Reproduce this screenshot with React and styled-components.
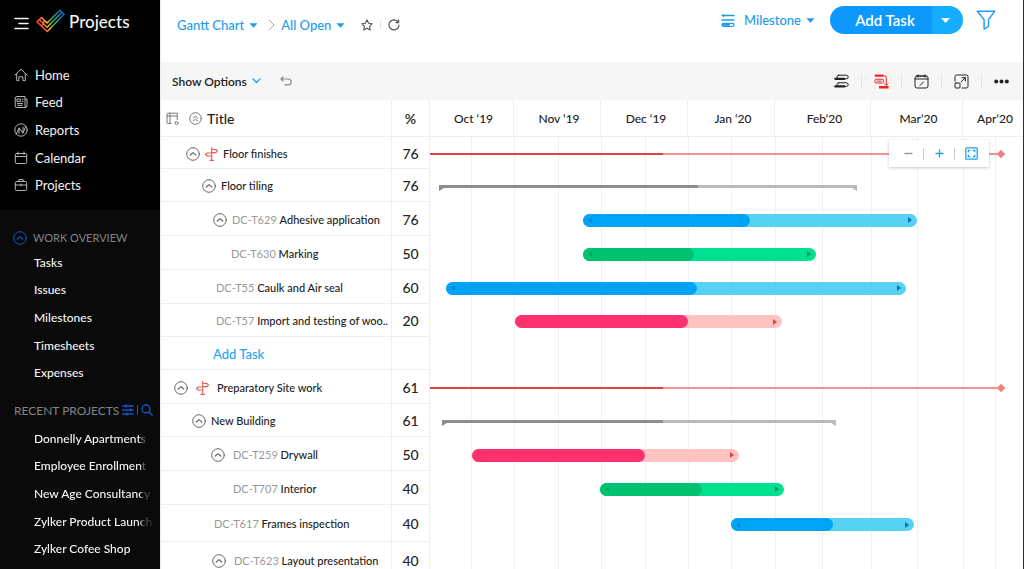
import { useState } from "react"
import styled, { createGlobalStyle } from "styled-components"

const GlobalStyle = createGlobalStyle`
* { box-sizing: border-box; }
body {
  margin: 0;
  font-family: Lato, "Open Sans", sans-serif;
  font-size: 13px;
  color: #222;
  background: #fff;
}
button, select {
  font: inherit;
  color: inherit;
  background: none;
  border: 0;
  padding: 0;
  cursor: pointer;
}
a { color: inherit; text-decoration: none; }
ul { list-style: none; margin: 0; padding: 0; }
svg { display: block; flex: none; }
`
const Page = styled.div`
display: flex;
height: 100vh;
overflow: hidden;
`

/* sidebar */
const Sidebar = styled.aside`
width: 160px;
flex: none;
background: #0a0a0a;
color: #f4f4f4;
`
const MainMenu = styled.div`
height: 210px;
background: #000;
`
const Brand = styled.div`
display: flex;
align-items: center;
height: 61px;
padding: 0 0 19px 14px;
`
const BrandName = styled.span`
font-size: 17px;
font-weight: 500;
margin-left: 4px;
`
const MenuButton = styled.button`
margin-right: 7px;
padding-top: 4px;
`
const NavList = styled.ul`
display: grid;
grid-auto-rows: 1fr;
height: 138px;
`
const NavLink = styled.a`
display: flex;
align-items: center;
gap: 7px;
height: 100%;
padding-left: ${props => props.$icon ? "14px" : "34px"};
font-size: ${props => props.$icon ? "13px" : "12px"};
font-weight: ${props => props.$icon ? 400 : 500};
line-height: 20px;
svg { color: #b5b5b5; }
`
const Fade = styled.span`
width: 126px;
white-space: nowrap;
mask-image: linear-gradient(to right, #000 106px, rgba(0, 0, 0, 0.35) 109px, rgba(0, 0, 0, 0.1) 120px);
`
const SectionHead = styled.div`
display: flex;
align-items: center;
gap: ${props => props.$gap}px;
height: ${props => props.$tall ? 39 : 38}px;
padding: ${props => props.$pad};
font-size: ${props => props.$tall ? 11 : 12}px;
color: #808488;
white-space: nowrap;
svg { color: #1556c8; }
`
const HeadRule = styled.span`
width: 1px;
height: 10px;
background: #555;
`

/* header */
const Main = styled.main`
flex: 1;
min-width: 0;
display: flex;
flex-direction: column;
border-left: 1px solid #ececec;
border-right: 1px solid #2b2b2b;
`
const TopBar = styled.header`
display: flex;
justify-content: space-between;
align-items: center;
flex: none;
height: 62px;
padding: 0 27px 0 16px;
color: #1c9cec;
`
const Crumbs = styled.div`
display: flex;
align-items: center;
padding-bottom: 12px;
`
const Picker = styled.label`
display: flex;
align-items: center;
gap: 5px;
`
const Select = styled.select`
appearance: none;
field-sizing: content;
font-size: 13px;
font-weight: 500;
line-height: 20px;
outline: none;
`
const CrumbArrow = styled.span`
color: #aaa;
margin: 0 6px 0 10px;
`
const CrumbTools = styled.div`
display: flex;
align-items: center;
gap: 7px;
margin-left: 16px;
color: #555;
`
const Divider = styled.span`
width: 1px;
height: ${props => props.$h || 14}px;
background: ${props => props.$dark ? "#ccc" : "#e2e2e2"};
`
const Actions = styled.div`
display: flex;
align-items: center;
padding-bottom: 22px;
`
const SplitButton = styled.div`
display: flex;
height: 28px;
margin: 0 13px 0 15px;
border-radius: 14px;
overflow: hidden;
color: #fff;
`
const AddButton = styled.button`
width: 102px;
padding-left: 8px;
font-size: 15px;
font-weight: 600;
background: #0c98fd;
`
const AddMenu = styled.button`
width: 31px;
padding-left: 8px;
background: #16acff;
`
const ToolBar = styled.div`
display: flex;
justify-content: space-between;
align-items: center;
flex: none;
height: 38px;
padding: 0 14px 0 11px;
background: #f6f6f6;
`
const Options = styled.button`
display: flex;
align-items: center;
gap: 5px;
font-size: 12px;
font-weight: 600;
`
const ToolGroup = styled.div`
display: flex;
align-items: center;
gap: ${props => props.$gap}px;
`

/* task table */
const Chart = styled.div`
display: flex;
flex: 1;
min-height: 0;
`
const Table = styled.table`
width: 269px;
height: max-content;
flex: none;
table-layout: fixed;
border-collapse: separate;
border-spacing: 0;
`
const HeadCell = styled.th`
width: ${props => props.$w || "auto"};
height: 37px;
padding: 0 0 0 ${props => props.$center ? 0 : 5}px;
font-weight: ${props => props.$center ? 600 : 500};
font-size: 14px;
text-align: ${props => props.$center ? "center" : "left"};
border-right: 1px solid #eee;
border-bottom: 1px solid #eee;
`
const HeadInner = styled.div`
display: flex;
align-items: center;
gap: 10px;
svg { color: #777; }
span { margin-left: -5px; }
`
const Cell = styled.td`
padding: 2px 0 0;
border-right: 1px solid #eee;
border-bottom: 1px solid #eee;
`
const Percent = styled(Cell)`
text-align: center;
font-size: 14px;
font-weight: 500;
line-height: 18px;
`
const TaskLine = styled.div`
display: flex;
align-items: center;
gap: ${props => props.$wide ? 8 : 5}px;
font-size: 11px;
font-weight: 500;
line-height: 16px;
white-space: nowrap;
`
const Toggle = styled.button`
color: #666;
`
const TaskId = styled.span`
color: #999;
font-weight: 400;
`
const AddLink = styled.button`
color: #1ba8f0;
font-size: 13px;
line-height: 16px;
`

/* timeline */
const Timeline = styled.section`
flex: 1;
min-width: 0;
display: flex;
flex-direction: column;
`
const Months = styled.div`
display: grid;
grid-template-columns: 84fr 87fr 87fr 87fr 96fr 92fr 60fr;
flex: none;
height: 37px;
border-bottom: 1px solid #eee;
`
const Month = styled.div`
display: flex;
align-items: center;
justify-content: center;
padding-left: 4px;
font-size: 12px;
font-weight: 500;
border-right: 1px solid #eee;
white-space: nowrap;
&:last-child { border-right: 0; }
`
const Lanes = styled.div`
position: relative;
flex: 1;
min-height: 0;
`
const GridLines = styled.div`
position: absolute;
inset: 0;
display: grid;
grid-template-columns: 42fr 43fr 44fr 43fr 44fr 43fr 43fr 44fr 47fr 49fr 46fr 46fr 32fr 27fr;
span { border-right: 1px solid #f0f0f0; }
span:last-child { border-right: 0; }
`
const Lane = styled.div`
position: relative;
display: flex;
align-items: center;
padding-top: 2px;
`
const Bar = styled.div`
height: 13px;
border-radius: 7px;
background: ${props => props.$tone.rest};
display: flex;
align-items: center;
justify-content: space-between;
padding-right: 5px;
color: ${props => props.$tone.arrow};
`
const BarDone = styled.div`
height: 100%;
border-radius: 7px;
background: ${props => props.$tone.done};
display: flex;
align-items: center;
padding-left: 5px;
`
const Summary = styled.div`
height: 3px;
background: #bababa;
position: relative;
&::before, &::after {
  content: "";
  position: absolute;
  top: 3px;
  border-top: 3px solid #8d8d8d;
}
&::before { left: 0; border-right: 5px solid transparent; }
&::after { right: 0; border-top-color: #bababa; border-left: 5px solid transparent; }
`
const SummaryDone = styled.div`
height: 100%;
background: #8d8d8d;
`
const Phase = styled.div`
height: 2px;
background: #f5918e;
position: relative;
&::after {
  content: "";
  position: absolute;
  right: -3px;
  top: -2px;
  width: 6px;
  height: 6px;
  background: #f5817e;
  transform: rotate(45deg);
}
`
const PhaseDone = styled.div`
height: 100%;
background: #dc4444;
`
const ZoomBox = styled.div`
position: absolute;
top: 3px;
right: 34px;
display: flex;
align-items: center;
justify-content: space-between;
width: 100px;
height: 27px;
padding: 0 11px 0 15px;
background: #fff;
color: #1ba3ee;
box-shadow: 0 1px 3px rgba(0, 0, 0, 0.22);
`

const tones = {
  blue: { done: "#00a4f7", rest: "#56d3f4", arrow: "#0575ad" },
  green: { done: "#00c270", rest: "#00e08f", arrow: "#009a5c" },
  pink: { done: "#ff306e", rest: "#fec2c0", arrow: "#d8444c" },
}

// width of the whole visible range, in timeline units
const RANGE = 593
const pct = n => `${(n / RANGE) * 100}%`

const tasks = [
  { h: 32, indent: 25, toggle: true, phase: true, name: "Floor finishes", percent: 76, type: "phase", from: 0, to: 571, done: 233 },
  { h: 33, indent: 41, toggle: true, name: "Floor tiling", percent: 76, type: "summary", from: 9, to: 427, done: 268 },
  { h: 34, indent: 52, toggle: true, id: "DC-T629", name: "Adhesive application", percent: 76, tone: "blue", from: 153, to: 487, done: 320 },
  { h: 34, indent: 70, id: "DC-T630", name: "Marking", percent: 50, tone: "green", from: 153, to: 386, done: 264 },
  { h: 34, indent: 55, id: "DC-T55", name: "Caulk and Air seal", percent: 60, tone: "blue", from: 16, to: 476, done: 267 },
  { h: 33, indent: 55, id: "DC-T57", name: "Import and testing of woo..", percent: 20, tone: "pink", from: 85, to: 352, done: 258 },
  { h: 33, indent: 52, add: true },
  { h: 34, indent: 13, toggle: true, phase: true, wide: true, name: "Preparatory Site work", percent: 61, type: "phase", from: 0, to: 571, done: 233 },
  { h: 33, indent: 31, toggle: true, name: "New Building", percent: 61, type: "summary", from: 12, to: 406, done: 233 },
  { h: 34, indent: 50, toggle: true, wide: true, id: "DC-T259", name: "Drywall", percent: 50, tone: "pink", from: 42, to: 309, done: 215 },
  { h: 34, indent: 72, id: "DC-T707", name: "Interior", percent: 40, tone: "green", from: 170, to: 354, done: 272 },
  { h: 37, indent: 53, id: "DC-T617", name: "Frames inspection", percent: 40, tone: "blue", from: 301, to: 484, done: 403 },
  { h: 37, indent: 51, toggle: true, wide: true, id: "DC-T623", name: "Layout presentation", percent: 40 },
]

const months = ["Oct ‘19", "Nov ‘19", "Dec ‘19", "Jan ‘20", "Feb‘20", "Mar‘20", "Apr‘20"]
const overview = ["Tasks", "Issues", "Milestones", "Timesheets", "Expenses"]
const recent = ["Donnelly Apartments", "Employee Enrollment", "New Age Consultancy", "Zylker Product Launch", "Zylker Cofee Shop"]

function Icon({ w = 14, h = w, box, children, width = 1 }) {
  return (
    <svg width={w} height={h} viewBox={box || `0 0 ${w} ${h}`} fill="none" stroke="currentColor"
      strokeWidth={width} strokeLinecap="round" strokeLinejoin="round" aria-hidden="true">
      {children}
    </svg>
  )
}

const Caret = ({ w = 9 }) => (
  <svg width={w} height="5" viewBox="0 0 10 5" fill="currentColor" aria-hidden="true"><path d="M0.5 0h9L5 5z" /></svg>
)

const Logo = () => (
  <svg width="29" height="24" viewBox="0 0 29 24" fill="none" strokeWidth="1.6" strokeLinejoin="round" aria-hidden="true">
    <defs>
      <linearGradient id="check" gradientUnits="userSpaceOnUse" x1="1" y1="16" x2="28" y2="4">
        <stop offset="0" stopColor="#e5352e" />
        <stop offset="0.2" stopColor="#f0633a" />
        <stop offset="0.36" stopColor="#f5c32c" />
        <stop offset="0.5" stopColor="#3dab4d" />
        <stop offset="0.7" stopColor="#1fa08c" />
        <stop offset="0.9" stopColor="#1668c4" />
      </linearGradient>
    </defs>
    <g stroke="url(#check)">
      <path d="M5.5 8.5 11 14 24 1.2 28 5.2 11.3 22.5 1 12.8z" />
      <path d="M3.4 10.7 11 18.3 26 3.2" />
      <path d="M7.5 14.8 5.3 17M8.9 12l-2 2" />
    </g>
  </svg>
)

const navItems = [
  ["Home", <path d="M1 7 7 1.2 13 7M2.7 6v6.6h2.2V8.8h4v3.8h2.4V6" />],
  ["Feed", <path d="M3 1.5h8v9.8a1.3 1.3 0 0 0 2 0V4h-2M3 1.5A1.7 1.7 0 0 0 1.2 3v8a1.5 1.5 0 0 0 1.6 1.5h9M3.4 4h3v2.5h-3zM3.4 8.5h5M3.4 10.3h5M8.2 4.2h.8M8.2 6.3h.8" />],
  ["Reports", <><circle cx="7" cy="7" r="6.2" /><path d="M2.3 11 5 5l4 5 2.8-7M5 5v5.5M9 10V4" /></>],
  ["Calendar", <path d="M2.5 2.5h9a1.2 1.2 0 0 1 1.2 1.2v7.6a1.2 1.2 0 0 1-1.2 1.2h-9a1.2 1.2 0 0 1-1.2-1.2V3.7a1.2 1.2 0 0 1 1.2-1.2zM1.3 5.5h11.4M4 1v2.4M10 1v2.4" />],
  ["Projects", <path d="M2.5 3.5h9a1.2 1.2 0 0 1 1.2 1.2v6.6a1.2 1.2 0 0 1-1.2 1.2h-9a1.2 1.2 0 0 1-1.2-1.2V4.7a1.2 1.2 0 0 1 1.2-1.2zM4.8 3.4V1.6h4.4v1.8M1.3 7h11.4M7 6v2" />],
]

const CircleUp = () => (
  <Icon><circle cx="7" cy="7" r="6.3" /><path d="M4.2 8 7 5.6 9.8 8" strokeWidth="1.2" /></Icon>
)

const Signpost = () => (
  <svg width="13" height="14" viewBox="0 0 13 14" fill="none" stroke="#ef5552" strokeWidth="1.1" strokeLinejoin="round" strokeLinecap="round" aria-hidden="true">
    <path d="M6.7 0.6v12.8M5 13.4h3.4M6.7 2.5h4.2l1.6 1.6-1.6 1.5H6.7M6.7 6H2.2L.6 7.5 2.2 9h4.5z" />
  </svg>
)

function SidebarMenu() {
  return (
    <Sidebar>
      <MainMenu>
        <Brand>
          <MenuButton aria-label="Menu">
            <Icon w={15} h={13} width={1.6}><path d="M1 1.5h13M5 6.5h9M1 11.5h13" /></Icon>
          </MenuButton>
          <Logo />
          <BrandName>Projects</BrandName>
        </Brand>
        <nav>
          <NavList>
            {navItems.map(([name, icon]) => (
              <li key={name}><NavLink href="#" $icon><Icon>{icon}</Icon>{name}</NavLink></li>
            ))}
          </NavList>
        </nav>
      </MainMenu>
      <SectionHead $tall $gap={6} $pad="16px 0 0 13px"><CircleUp />WORK OVERVIEW</SectionHead>
      <NavList>
        {overview.map(name => <li key={name}><NavLink href="#">{name}</NavLink></li>)}
      </NavList>
      <SectionHead $gap={3} $pad="8px 0 0 14px">
        RECENT PROJECTS
        <Icon w={12} width={1.3}><path d="M.7 2h10.6M.7 6h10.6M.7 10h10.6M4 .8v2.4M8.5 4.8v2.4M5 8.8v2.4" /></Icon>
        <HeadRule />
        <Icon w={12} width={1.4}><circle cx="5" cy="5" r="4" /><path d="m8 8 3.2 3.2" /></Icon>
      </SectionHead>
      <NavList>
        {recent.map(name => <li key={name}><NavLink href="#"><Fade>{name}</Fade></NavLink></li>)}
      </NavList>
    </Sidebar>
  )
}

function Dropdown({ label, options }) {
  return (
    <Picker>
      <Select aria-label={label}>
        {options.map(option => <option key={option}>{option}</option>)}
      </Select>
      <Caret />
    </Picker>
  )
}

function Header() {
  return (
    <TopBar>
      <Crumbs>
        <Dropdown label="View" options={["Gantt Chart", "List"]} />
        <CrumbArrow><Icon w={7} h={12}><path d="m1 1 5 5-5 5" /></Icon></CrumbArrow>
        <Dropdown label="Filter" options={["All Open", "Closed"]} />
        <CrumbTools>
          <button aria-label="Favourite"><Icon w={12} box="0 0 14 14" width={1.3}><path d="m7 1 1.9 3.9 4.1.6-3 3 .7 4.3L7 10.7l-3.7 2.1.7-4.3-3-3 4.1-.6z" /></Icon></button>
          <Divider $h={8} />
          <button aria-label="Refresh"><Icon w={12} width={1.2}><path d="M10.2 3.2A5 5 0 1 0 11 6M10.6 1v2.6H8" /></Icon></button>
        </CrumbTools>
      </Crumbs>
      <Actions>
        <ToolGroup $gap={9}>
          <Icon w={14} h={13} width={1.3}>
            <path d="M1 1.5h12M1 6h12M2.5.5v2" />
            <rect x="1" y="9.3" width="12" height="3" rx="1.5" />
            <path d="M2 10.8h6" strokeWidth="2" />
          </Icon>
          <Dropdown label="Group by" options={["Milestone", "Status"]} />
        </ToolGroup>
        <SplitButton>
          <AddButton>Add Task</AddButton>
          <AddMenu aria-label="More add options" aria-haspopup="menu"><Caret w={11} /></AddMenu>
        </SplitButton>
        <button aria-label="Filter tasks">
          <Icon w={20} width={1.4}><path d="M1.2 1.2h17.6L12.5 9.5v7l-4.4 2.6V9.5z" /></Icon>
        </button>
      </Actions>
    </TopBar>
  )
}

function Tools() {
  return (
    <ToolBar>
      <ToolGroup $gap={19}>
        <Options aria-haspopup="menu">
          Show Options
          <Icon w={9} h={6} width={1.3}><path d="m1 1 3.5 3.5L8 1" stroke="#1ba3ee" /></Icon>
        </Options>
        <button aria-label="Undo">
          <Icon w={12} h={10} width={1.2}><path d="M3 1 1 3l2 2M1 3h7.2a2.9 2.9 0 0 1 0 5.8H5" stroke="#888" /></Icon>
        </button>
      </ToolGroup>
      <ToolGroup $gap={12}>
        <button aria-label="Baseline">
          <Icon w={15}>
            <rect x="3" y="1.2" width="11.2" height="3.6" rx="1.8" />
            <path d="M1.3 4.8h9" strokeWidth="2.2" />
            <rect x="3" y="8.8" width="11.2" height="3.6" rx="1.8" />
            <path d="M1.3 12.4h9" strokeWidth="2.2" />
          </Icon>
        </button>
        <Divider />
        <button aria-label="Critical path">
          <svg width="15" height="15" viewBox="0 0 15 15" fill="none" stroke="#ee2326" strokeLinejoin="round" aria-hidden="true">
            <path d="M.8 1.6h8.7M5 13.2h9.6" strokeWidth="2.4" />
            <path d="M9.5 2h1.6c.8 0 1.2.5 1.2 1.2v7.6M10.4 9.6l1.9 1.9 1.9-1.9" />
            <rect x="1" y="5.2" width="8.4" height="3.8" rx="1" />
            <path d="M2.8 7.1h4.8" />
          </svg>
        </button>
        <Divider />
        <button aria-label="Schedule">
          <Icon w={15}><rect x="1" y="2" width="13" height="12" rx="2" /><path d="M1 5h13M3 2h9M4 .8v2.4M11 .8v2.4M6 11.4l3.5-3.5" /></Icon>
        </button>
        <Divider />
        <button aria-label="Expand">
          <Icon w={15}><path d="M1 7V2.6A1.6 1.6 0 0 1 2.6 1h9.8A1.6 1.6 0 0 1 14 2.6v9.8a1.6 1.6 0 0 1-1.6 1.6H8M7 8l4.3-4.3M8 3.7h3.3V7" /><rect x="1" y="9" width="5" height="5" rx="1" /></Icon>
        </button>
        <Divider />
        <button aria-label="More">
          <svg width="15" height="5" viewBox="0 0 15 5" fill="#222" aria-hidden="true"><circle cx="2.2" cy="2.5" r="2" /><circle cx="7.5" cy="2.5" r="2" /><circle cx="12.8" cy="2.5" r="2" /></svg>
        </button>
      </ToolGroup>
    </ToolBar>
  )
}

function TaskTable() {
  return (
    <Table>
      <thead>
        <tr>
          <HeadCell>
            <HeadInner>
              <Icon w={13}><path d="M5 11.5H2a1 1 0 0 1-1-1V2.2a1 1 0 0 1 1-1h9.2V4M1 4h10.2v3.5M4 1.2v10.3" /><circle cx="10.5" cy="11" r="1.5" /></Icon>
              <Icon w={13}><circle cx="6.5" cy="6.5" r="5.8" /><path d="m4.3 6.2 2.2-2 2.2 2M4.3 9l2.2-2 2.2 2" /></Icon>
              <span>Title</span>
            </HeadInner>
          </HeadCell>
          <HeadCell $w="38px" $center>%</HeadCell>
        </tr>
      </thead>
      <tbody>
        {tasks.map((task, index) => (
          <tr key={index} style={{ height: task.h }}>
            <Cell>
              <TaskLine $wide={task.wide} style={{ paddingLeft: task.indent }}>
                {task.toggle && <Toggle aria-label={`Collapse ${task.name}`}><CircleUp /></Toggle>}
                {task.phase && <Signpost />}
                {task.add
                  ? <AddLink>Add Task</AddLink>
                  : <span>{task.id && <TaskId>{task.id} </TaskId>}{task.name}</span>}
              </TaskLine>
            </Cell>
            <Percent>{task.percent}</Percent>
          </tr>
        ))}
      </tbody>
    </Table>
  )
}

function LaneItem({ task }) {
  const { type, tone, from, to, done } = task
  if (!to) return null
  const place = { marginLeft: pct(from), width: pct(to - from) }
  const progress = { width: `${((done - from) / (to - from)) * 100}%` }
  if (type === "phase") return <Phase style={place}><PhaseDone style={progress} /></Phase>
  if (type === "summary") return <Summary style={place}><SummaryDone style={progress} /></Summary>
  return (
    <Bar $tone={tones[tone]} style={place}>
      <BarDone $tone={tones[tone]} style={{ width: `calc((100% + 5px) * ${(done - from) / (to - from)})` }}>
        <svg width="4" height="6" viewBox="0 0 4 6" fill="currentColor" opacity="0.6" aria-hidden="true"><path d="M4 0v6L0 3z" /></svg>
      </BarDone>
      <svg width="4" height="6" viewBox="0 0 4 6" fill="currentColor" aria-hidden="true"><path d="M0 0v6l4-3z" /></svg>
    </Bar>
  )
}

function GanttTimeline() {
  const [zoom, setZoom] = useState(1)
  return (
    <Timeline data-zoom={zoom}>
      <Months>
        {months.map(month => <Month key={month}>{month}</Month>)}
      </Months>
      <Lanes>
        <GridLines>
          {Array.from({ length: 14 }, (_, i) => <span key={i} />)}
        </GridLines>
        {tasks.map((task, index) => (
          <Lane key={index} style={{ height: task.h }}><LaneItem task={task} /></Lane>
        ))}
        <ZoomBox>
          <button aria-label="Zoom out" onClick={() => setZoom(zoom - 1)}>
            <Icon w={9} width={1.4}><path d="M1 4.5h7" stroke="#999" /></Icon>
          </button>
          <Divider $h={12} $dark />
          <button aria-label="Zoom in" onClick={() => setZoom(zoom + 1)}>
            <Icon w={9} width={1.3}><path d="M1 4.5h7M4.5 1v7" /></Icon>
          </button>
          <Divider $h={12} $dark />
          <button aria-label="Fit to screen" onClick={() => setZoom(1)}>
            <Icon w={13} width={1.3}><rect x=".8" y=".8" width="11.4" height="11.4" rx="1" /><path d="M3.3 4.8V3.3h1.5M8.2 3.3h1.5v1.5M9.7 8.2v1.5H8.2M4.8 9.7H3.3V8.2" /></Icon>
          </button>
        </ZoomBox>
      </Lanes>
    </Timeline>
  )
}

function App() {
  return (
    <Page>
      <GlobalStyle />
      <SidebarMenu />
      <Main>
        <Header />
        <Tools />
        <Chart>
          <TaskTable />
          <GanttTimeline />
        </Chart>
      </Main>
    </Page>
  )
}

export default App
